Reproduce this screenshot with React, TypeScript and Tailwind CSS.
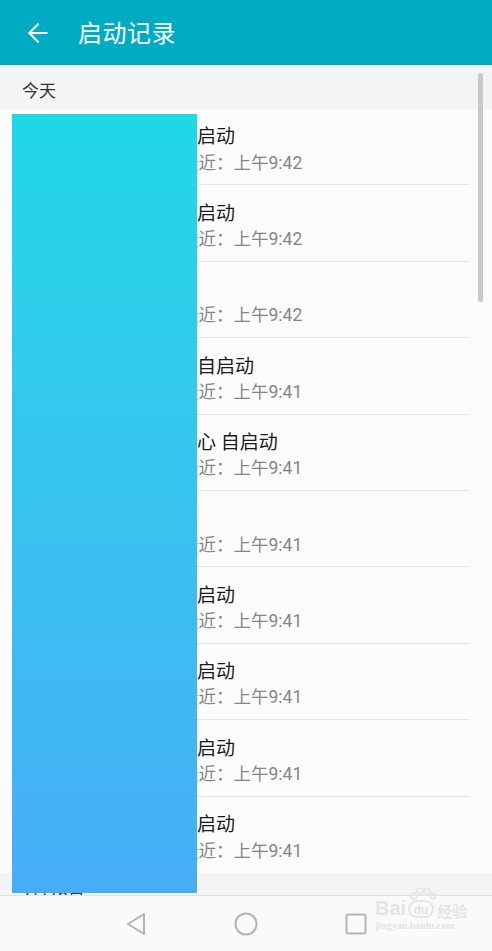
import { ArrowLeft } from "lucide-react";

const rows = [
  { name: "应用管家", title: "启动", time: "上午9:42" },
  { name: "应用市场", title: "启动", time: "上午9:42" },
  { name: "天气", title: "", time: "上午9:42" },
  { name: "手机管家", title: "自启动", time: "上午9:41" },
  { name: "华为服务中", title: "心 自启动", time: "上午9:41" },
  { name: "相册", title: "", time: "上午9:41" },
  { name: "浏览器", title: "启动", time: "上午9:41" },
  { name: "日历", title: "启动", time: "上午9:41" },
  { name: "主题", title: "启动", time: "上午9:41" },
  { name: "音乐", title: "启动", time: "上午9:41" },
];

function Watermark() {
  return (
    <div className="absolute left-[375px] top-[898px] flex flex-col text-[#e4e4e4] [font-family:'Liberation_Sans',sans-serif]">
      <div className="flex items-end leading-none">
        <span className="text-[20px] font-bold">Bai</span>
        <span className="relative ml-[2px] flex h-[18px] w-[26px] items-end justify-center rounded-[9px] border-2 border-[#e6e6e6] text-[12px] font-bold">
          du
          <svg width="26" height="13" viewBox="0 0 26 13" className="absolute -top-[15px] left-0">
            <circle cx="4" cy="9" r="3" fill="none" stroke="#e6e6e6" strokeWidth="1.6" />
            <circle cx="10" cy="4" r="3" fill="none" stroke="#e6e6e6" strokeWidth="1.6" />
            <circle cx="17" cy="4" r="3" fill="none" stroke="#e6e6e6" strokeWidth="1.6" />
            <circle cx="23" cy="9" r="2.6" fill="none" stroke="#e6e6e6" strokeWidth="1.6" />
          </svg>
        </span>
        <span className="ml-[3px] text-[15px] font-bold [font-family:'Noto_Sans_CJK_SC',sans-serif]">经验</span>
      </div>
      <span className="mt-[3px] text-[10px] font-bold leading-none [font-family:'Liberation_Serif',serif]">jingyan.baidu.com</span>
    </div>
  );
}

function NavBar() {
  return (
    <div className="flex h-[56px] shrink-0 items-center border-t border-[#e2e2e2] bg-[#fafafa] pl-[81px]">
      <div className="flex w-[110px] justify-center">
        <svg width="22" height="24" viewBox="0 0 22 24">
          <path d="M19 2 L3 12 L19 22 Z" fill="none" stroke="#b3b3b3" strokeWidth="2" strokeLinejoin="round" />
        </svg>
      </div>
      <div className="flex w-[110px] justify-center">
        <svg width="26" height="26" viewBox="0 0 26 26">
          <circle cx="13" cy="13" r="10.5" fill="none" stroke="#b3b3b3" strokeWidth="2" />
        </svg>
      </div>
      <div className="flex w-[110px] justify-center">
        <svg width="22" height="22" viewBox="0 0 22 22">
          <rect x="1.5" y="1.5" width="19" height="19" rx="1.5" fill="none" stroke="#b3b3b3" strokeWidth="2" />
        </svg>
      </div>
    </div>
  );
}

export default function App() {
  return (
    <div className="relative flex h-[951px] w-[492px] flex-col overflow-hidden bg-[#fcfcfc] [font-family:'Roboto','Noto_Sans_CJK_SC',sans-serif]">
      <div className="flex h-[65px] shrink-0 items-center bg-[#00acc3] text-white">
        <ArrowLeft className="ml-[23px] h-[30px] w-[30px]" strokeWidth={1.6} />
        <span className="ml-[25px] pt-[2px] text-[24px] leading-none tracking-[0.5px]">启动记录</span>
      </div>
      <div className="h-px shrink-0 bg-[#e8f6f8]" />

      <div className="relative flex flex-1 flex-col overflow-hidden">
        <div className="flex h-[43px] shrink-0 items-center bg-[#f4f4f4] pl-[22px] pt-[8px] text-[17px] text-[#333]">
          今天
        </div>
        {rows.map((r, i) => (
          <div key={i} className="flex h-[76.4px] shrink-0 items-stretch bg-[#fcfcfc]">
            <div className="ml-[24px] mt-[18px] h-[40px] w-[40px] rounded-lg bg-[#e0e0e0]" />
            <div
              className={`ml-[24px] mr-[22px] flex flex-1 flex-col justify-center pt-[5px] ${i < rows.length - 1 ? "border-b border-[#e4e4e4]" : ""}`}
            >
              <div className="flex h-[25px] items-center whitespace-nowrap pt-[1px] text-[19px] text-[#1a1a1a]">
                <span className="inline-block w-[109px] overflow-hidden">{r.name}</span>
                <span>{r.title}</span>
              </div>
              <div className="mt-[2px] flex h-[22px] items-center whitespace-nowrap text-[17.5px] text-[#858585]">
                <span className="inline-block w-[93px] overflow-hidden">启动1次</span>
                <span>最近：{r.time}</span>
              </div>
            </div>
          </div>
        ))}
        <div className="flex h-[22px] shrink-0 items-end bg-[#f4f4f4] pl-[22px] text-[17px] leading-none text-[#333]">
          <span className="translate-y-[8px]">1月16日</span>
        </div>

        <div className="absolute right-[9px] top-[7px] h-[229px] w-[5px] rounded-full bg-[#c9c9c9]" />
      </div>

      <NavBar />
      <Watermark />

      <div className="absolute left-[12px] top-[114px] h-[779px] w-[185px] bg-gradient-to-b from-[#1fd8e6] to-[#46adf7]" />
    </div>
  );
}
